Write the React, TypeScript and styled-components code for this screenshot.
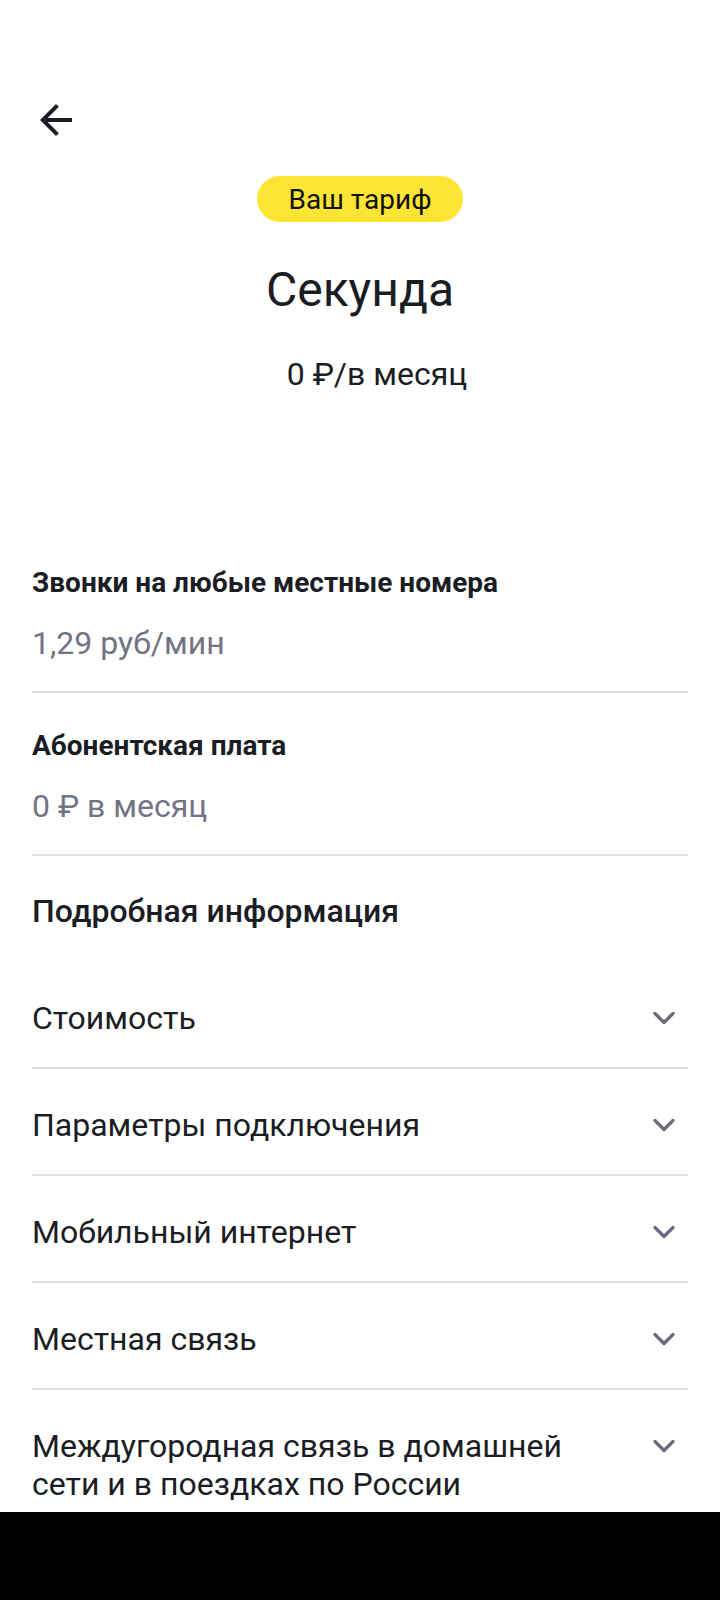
import { createGlobalStyle, styled } from 'styled-components';

const GlobalStyle = createGlobalStyle`
  html, body {
    margin: 0;
    padding: 0;
    background: #fff;
  }
  body {
    font-family: Roboto, 'Noto Sans', sans-serif;
    color: #1b1d24;
  }
`;

const Screen = styled.div`
  width: 720px;
  height: 1512px;
  overflow: hidden;
  display: flex;
  flex-direction: column;
  background: #fff;
`;

const TopBar = styled.div`
  display: flex;
  align-items: center;
  padding: 96px 32px 0;
  height: 48px;
`;

const BackButton = styled.button`
  width: 48px;
  height: 48px;
  padding: 0;
  border: 0;
  background: none;
  display: flex;
  align-items: center;
  justify-content: center;
  color: #1b1d24;
  overflow: visible;
`;

const Hero = styled.div`
  display: flex;
  flex-direction: column;
  align-items: center;
`;

const Badge = styled.div`
  margin-top: 32px;
  height: 46px;
  padding: 0 32px;
  border-radius: 23px;
  background: #ffe533;
  display: flex;
  align-items: center;
  font-size: 28px;
  color: #111;
`;

const Title = styled.h1`
  margin: 38px 0 0;
  font-size: 48px;
  line-height: 60px;
  font-weight: 400;
`;

const Price = styled.div`
  margin-top: 34px;
  padding-left: 34px;
  font-size: 32px;
  line-height: 40px;
`;

const Content = styled.div`
  padding: 136px 32px 0;
  display: flex;
  flex-direction: column;
`;

const InfoBlock = styled.div`
  padding: 35px 0 28px;
  border-bottom: 2px solid #dedee3;
  display: flex;
  flex-direction: column;
  gap: 22px;
`;

const InfoLabel = styled.div`
  font-size: 28px;
  line-height: 36px;
  font-weight: 700;
`;

const InfoValue = styled.div`
  font-size: 32px;
  line-height: 40px;
  color: #737385;
`;

const SectionTitle = styled.h2`
  margin: 35px 0 31px;
  font-size: 32px;
  line-height: 40px;
  font-weight: 500;
`;

const Row = styled.div`
  display: flex;
  align-items: flex-start;
  justify-content: space-between;
  gap: 16px;
  padding: 37px 0 30px;
  border-bottom: 2px solid #dedee3;
`;

const RowText = styled.div`
  font-size: 32px;
  line-height: 38px;
  max-width: 590px;
`;

const Chevron = styled.span`
  flex: none;
  width: 48px;
  height: 38px;
  display: flex;
  align-items: center;
  justify-content: center;
  color: #6b6b7c;
`;

const NavBar = styled.div`
  height: 88px;
  background: #000;
`;

const rows = [
  'Стоимость',
  'Параметры подключения',
  'Мобильный интернет',
  'Местная связь',
  'Междугородная связь в домашней сети и в поездках по России',
];

const ArrowBack = () => (
  <svg width="50" height="50" viewBox="0 0 24 24" fill="currentColor">
    <path d="M20 11H7.83l5.59-5.59L12 4l-8 8 8 8 1.41-1.41L7.83 13H20v-2z" />
  </svg>
);

const ChevronDown = () => (
  <svg width="24" height="14" viewBox="0 0 24 14" fill="none" stroke="currentColor" strokeWidth="3.4" strokeLinecap="round" strokeLinejoin="round">
    <path d="M3 2.5l9 9 9-9" />
  </svg>
);

const App = () => {
  return (
    <>
      <GlobalStyle />
      <Screen>
        <TopBar>
          <BackButton aria-label="Назад">
            <ArrowBack />
          </BackButton>
        </TopBar>
        <Hero>
          <Badge>Ваш тариф</Badge>
          <Title>Секунда</Title>
          <Price>0 ₽/в месяц</Price>
        </Hero>
        <Content>
          <InfoBlock>
            <InfoLabel>Звонки на любые местные номера</InfoLabel>
            <InfoValue>1,29 руб/мин</InfoValue>
          </InfoBlock>
          <InfoBlock>
            <InfoLabel>Абонентская плата</InfoLabel>
            <InfoValue>0 ₽ в месяц</InfoValue>
          </InfoBlock>
          <SectionTitle>Подробная информация</SectionTitle>
          {rows.map((r) => (
            <Row key={r}>
              <RowText>{r}</RowText>
              <Chevron>
                <ChevronDown />
              </Chevron>
            </Row>
          ))}
        </Content>
      </Screen>
      <NavBar />
    </>
  );
};

export default App;
